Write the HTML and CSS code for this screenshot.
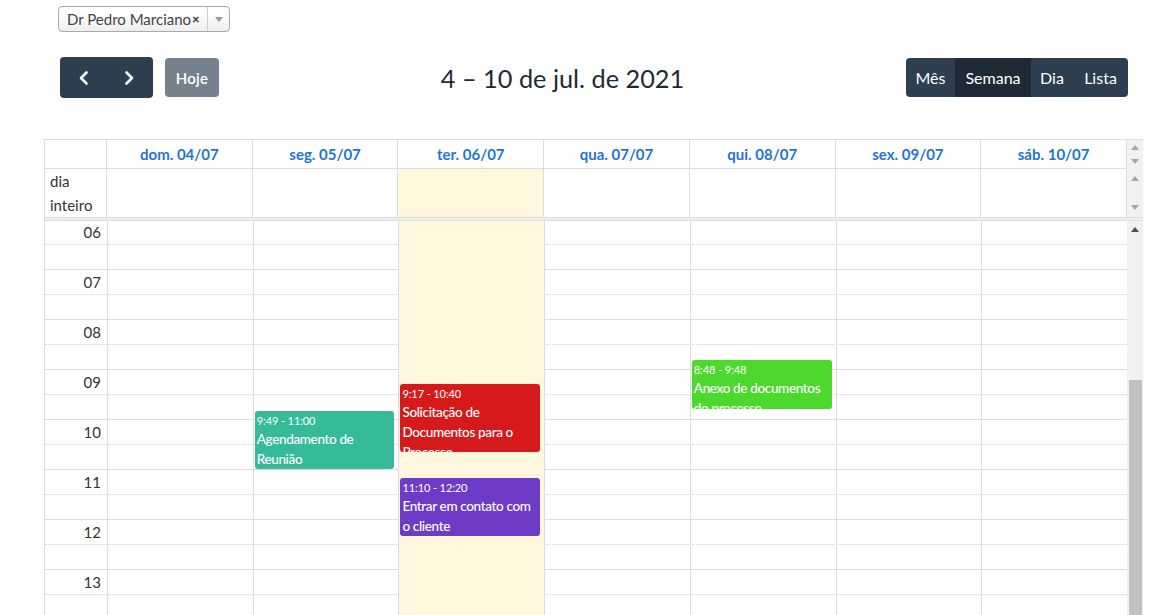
FILE: index.html
```html
<!DOCTYPE html>
<html lang="pt-BR">
<head>
<meta charset="utf-8">
<title>Agenda</title>
<link rel="stylesheet" href="styles.css">
</head>
<body>
<div class="page">
  <div class="select-row">
    <div class="select">
      <span class="select-value">Dr Pedro Marciano</span><span class="select-clear">×</span>
      <span class="select-arrow"><span class="tri-down"></span></span>
    </div>
  </div>

  <div class="toolbar">
    <div class="tb-left">
      <div class="btn-group nav">
        <button class="btn nav-btn" aria-label="anterior">
          <svg width="12" height="16" viewBox="0 0 12 16"><path d="M8.5 2.5 L3 8 L8.5 13.5" fill="none" stroke="#fff" stroke-width="2.6" stroke-linecap="round" stroke-linejoin="round"/></svg>
        </button>
        <button class="btn nav-btn" aria-label="próximo">
          <svg width="12" height="16" viewBox="0 0 12 16"><path d="M3.5 2.5 L9 8 L3.5 13.5" fill="none" stroke="#fff" stroke-width="2.6" stroke-linecap="round" stroke-linejoin="round"/></svg>
        </button>
      </div>
      <button class="btn today" disabled>Hoje</button>
    </div>
    <h2 class="title">4 – 10 de jul. de 2021</h2>
    <div class="tb-right">
      <div class="btn-group views">
        <button class="btn view">Mês</button>
        <button class="btn view active">Semana</button>
        <button class="btn view">Dia</button>
        <button class="btn view">Lista</button>
      </div>
    </div>
  </div>

  <div class="cal">
    <div class="head">
      <div class="hcell axis"></div>
      <div class="hcell">dom. 04/07</div>
      <div class="hcell">seg. 05/07</div>
      <div class="hcell">ter. 06/07</div>
      <div class="hcell">qua. 07/07</div>
      <div class="hcell">qui. 08/07</div>
      <div class="hcell">sex. 09/07</div>
      <div class="hcell">sáb. 10/07</div>
      <div class="scroll-cell">
        <span class="tri-up light"></span>
        <span class="tri-down light"></span>
      </div>
    </div>

    <div class="allday">
      <div class="acell axis"><span class="allday-label">dia inteiro</span></div>
      <div class="acell"></div>
      <div class="acell"></div>
      <div class="acell today-bg"></div>
      <div class="acell"></div>
      <div class="acell"></div>
      <div class="acell"></div>
      <div class="acell"></div>
      <div class="scroll-cell tall">
        <span class="tri-up light"></span>
        <span class="tri-down light"></span>
      </div>
    </div>

    <div class="divider"></div>

    <div class="body">
      <div class="body-main">
        <div class="grid">
          <div class="slats">
            <div class="slat"><span class="time">06</span></div>
            <div class="slat half"></div>
            <div class="slat"><span class="time">07</span></div>
            <div class="slat half"></div>
            <div class="slat"><span class="time">08</span></div>
            <div class="slat half"></div>
            <div class="slat"><span class="time">09</span></div>
            <div class="slat half"></div>
            <div class="slat"><span class="time">10</span></div>
            <div class="slat half"></div>
            <div class="slat"><span class="time">11</span></div>
            <div class="slat half"></div>
            <div class="slat"><span class="time">12</span></div>
            <div class="slat half"></div>
            <div class="slat"><span class="time">13</span></div>
            <div class="slat half"></div>
            <div class="slat"><span class="time">14</span></div>
            <div class="slat half"></div>
          </div>
          <div class="cols">
            <div class="col axis"></div>
            <div class="col"></div>
            <div class="col">
              <div class="event teal" style="top:190.8px;height:58.2px">
                <div class="ev-time">9:49 - 11:00</div>
                <div class="ev-title">Agendamento de Reunião</div>
              </div>
            </div>
            <div class="col today-bg">
              <div class="event red" style="top:164.2px;height:68.2px">
                <div class="ev-time">9:17 - 10:40</div>
                <div class="ev-title">Solicitação de Documentos para o Processo</div>
              </div>
              <div class="event purple" style="top:258.3px;height:57.4px">
                <div class="ev-time">11:10 - 12:20</div>
                <div class="ev-title">Entrar em contato com o cliente</div>
              </div>
            </div>
            <div class="col"></div>
            <div class="col">
              <div class="event green" style="top:140px;height:49px">
                <div class="ev-time">8:48 - 9:48</div>
                <div class="ev-title">Anexo de documentos do processo</div>
              </div>
            </div>
            <div class="col"></div>
            <div class="col"></div>
          </div>
        </div>
      </div>
      <div class="vscroll">
        <span class="tri-up dark"></span>
        <div class="thumb"></div>
      </div>
    </div>
  </div>
</div>
</body>
</html>
```

FILE: styles.css
```css
* { box-sizing: border-box; }

html, body {
  margin: 0;
  padding: 0;
  background: #fff;
}

body {
  font-family: Lato, "Open Sans", "Liberation Sans", sans-serif;
  color: #212529;
  overflow: hidden;
}

.page {
  padding: 6px 21px 0 44px;
}

/* ---------- select ---------- */
.select-row {
  padding-left: 14px;
}
.select {
  display: flex;
  align-items: center;
  width: 172px;
  height: 26px;
  border: 1px solid #aaa;
  border-radius: 4px;
  background: linear-gradient(#fff 20%, #eee 100%);
  font-size: 15px;
  color: #444;
  padding-left: 8px;
}
.select-value {
  white-space: nowrap;
}
.select-clear {
  font-size: 13px;
  font-weight: bold;
  color: #333;
  margin-left: 1px;
}
.select-arrow {
  margin-left: auto;
  width: 22px;
  height: 24px;
  border-left: 1px solid #ccc;
  display: flex;
  align-items: center;
  justify-content: center;
}

/* triangles */
.tri-down, .tri-up {
  display: block;
  width: 0;
  height: 0;
  border-left: 4px solid transparent;
  border-right: 4px solid transparent;
}
.tri-down { border-top: 5px solid #888; }
.tri-up { border-bottom: 5px solid #888; }
.tri-up.light { border-bottom-color: #a6a6a6; }
.tri-down.light { border-top-color: #a6a6a6; }
.tri-up.dark { border-bottom-color: #505050; }
.select-arrow .tri-down { border-top-color: #999; }

/* ---------- toolbar ---------- */
.toolbar {
  margin-top: 25px;
  padding: 0 15px 0 16px;
  height: 41px;
  display: flex;
  align-items: center;
  justify-content: space-between;
}
.tb-left, .tb-right {
  display: flex;
  align-items: center;
}

.btn {
  font-family: inherit;
  border: 0;
  color: #fff;
  background: #2c3e50;
  font-size: 16px;
  cursor: pointer;
  padding: 0;
}
.btn-group {
  display: flex;
  border-radius: 4px;
  overflow: hidden;
}
.nav { height: 41px; }
.nav-btn {
  width: 46.5px;
  height: 41px;
  display: flex;
  align-items: center;
  justify-content: center;
}
.nav-btn:first-child { padding-left: 1px; }
.nav-btn:last-child { padding-right: 1px; }

.today {
  margin-left: 12px;
  width: 54px;
  height: 39px;
  border-radius: 4px;
  opacity: 0.65;
  font-size: 15px;
  font-weight: 600;
  letter-spacing: 0.2px;
}

.title {
  margin: 0;
  font-size: 25.3px;
  font-weight: 400;
  color: #1f2a37;
  white-space: nowrap;
}

.views { height: 39px; }
.view {
  height: 39px;
  padding: 0;
}
.view:first-child { width: 49px; }
.view:nth-child(2) { width: 76px; }
.view:nth-child(3) { width: 42px; }
.view:last-child { width: 55px; }
.view.active { background: #1e2b37; }

/* ---------- calendar ---------- */
.cal {
  margin-top: 41px;
  width: 1099px;
  border-left: 1px solid #ddd;
  border-top: 1px solid #ddd;
}

.head, .allday {
  display: grid;
  grid-template-columns: 62px repeat(7, 1fr) 16px;
}

.hcell {
  height: 29px;
  border-right: 1px solid #ddd;
  border-bottom: 1px solid #ddd;
  display: flex;
  align-items: center;
  justify-content: center;
  font-size: 15px;
  font-weight: 700;
  color: #1f74d6;
}

.scroll-cell {
  background: #f1f1f1;
  display: flex;
  flex-direction: column;
  align-items: center;
  justify-content: space-between;
}
.head .scroll-cell {
  height: 29px;
  padding: 5px 0 5px;
}
.scroll-cell.tall {
  height: 48px;
  padding: 7px 0 7px;
}

.allday { height: 48px; }
.acell {
  border-right: 1px solid #ddd;
}
.acell.axis {
  padding: 0 0 0 5px;
  font-size: 15px;
  line-height: 24px;
  color: #333;
}
.allday-label {
  display: block;
  width: 40px;
}

.today-bg { background: #fff8de; }

.divider {
  height: 4px;
  border-top: 1px solid #ddd;
  border-bottom: 1px solid #ddd;
  background: #eee;
}

.body {
  display: flex;
  height: 394px;
  overflow: hidden;
}
.body-main {
  flex: 1;
  overflow: hidden;
}
.grid {
  position: relative;
  margin-top: -1px;
}
.slat {
  height: 25px;
  border-bottom: 1px dotted #d4d4d4;
  display: flex;
}
.slat.half {
  border-bottom: 1px solid #ddd;
}
.time {
  width: 62px;
  text-align: right;
  padding-right: 6px;
  font-size: 15px;
  line-height: 24px;
  color: #333;
}

.cols {
  position: absolute;
  inset: 0;
  display: grid;
  grid-template-columns: 62px repeat(7, 1fr);
  pointer-events: none;
}
.col {
  position: relative;
  border-left: 1px solid #ddd;
}
.col.axis { border-left: 0; }

.event {
  position: absolute;
  left: 1px;
  right: 4px;
  border-radius: 3px;
  color: #fff;
  overflow: hidden;
  padding: 1px 1px 0 2px;
}
.ev-time {
  font-size: 11px;
  line-height: 17px;
  font-weight: 400;
  letter-spacing: -0.1px;
}
.ev-title {
  font-size: 13.5px;
  line-height: 20px;
  font-weight: 500;
  letter-spacing: -0.35px;
}
.teal { background: #35bb9a; }
.red { background: #d61a1c; }
.purple { background: #6e3bc6; }
.green { background: #4cd82c; }

.vscroll {
  width: 16px;
  background: #f1f1f1;
  display: flex;
  flex-direction: column;
  align-items: center;
  padding-top: 6px;
}
.thumb {
  margin-top: 148px;
  width: 13px;
  flex: 1;
  background: #c1c1c1;
}
```
